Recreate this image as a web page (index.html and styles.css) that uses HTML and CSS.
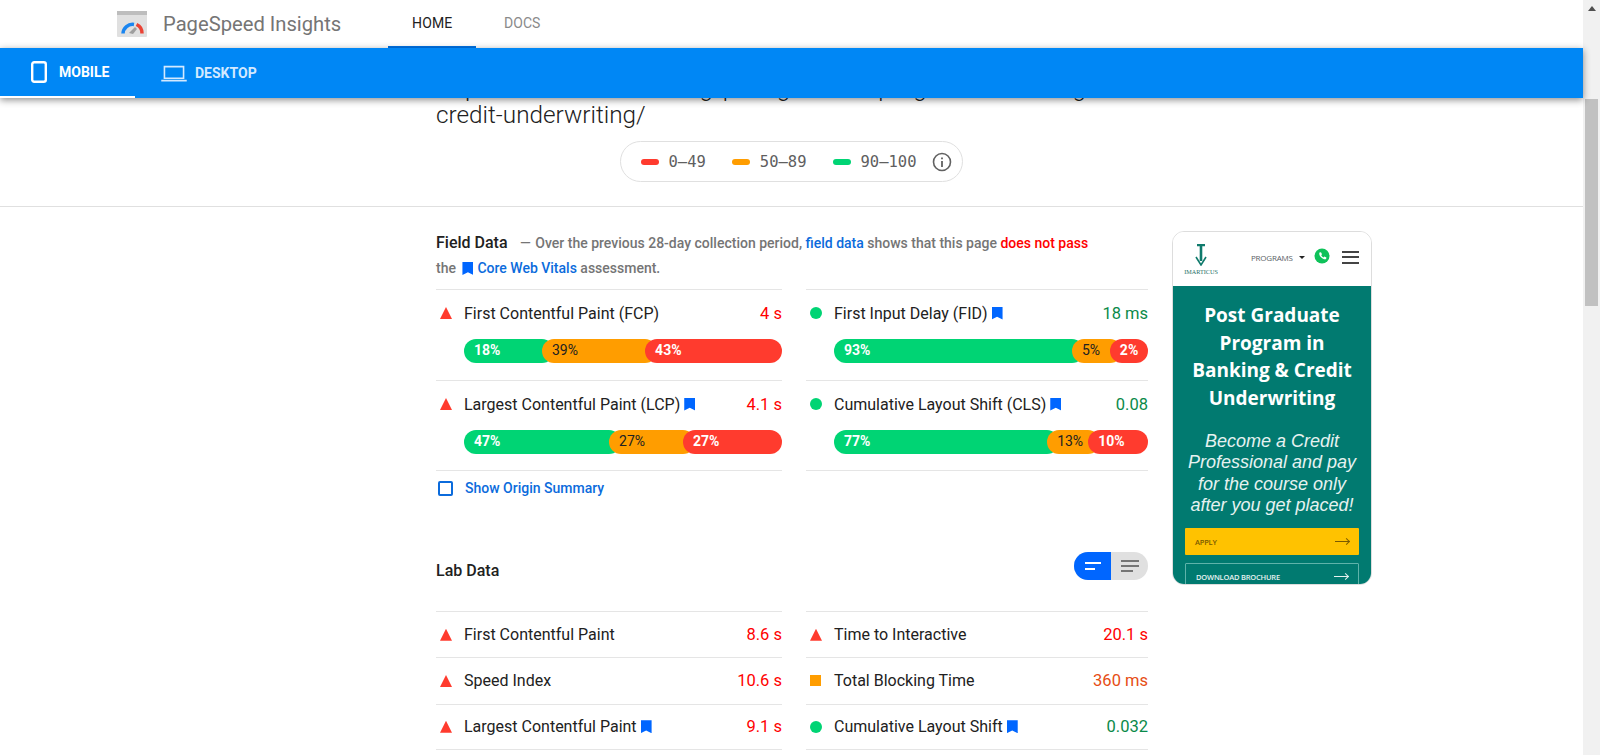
FILE: index.html
```html
<!DOCTYPE html>
<html lang="en">

<head>
   <meta charset="UTF-8">
   <title>PageSpeed Insights</title>
   <link rel="stylesheet" href="styles.css">
</head>

<body>
   <div class="app">
      <div class="main">
         <!-- Top navigation -->
         <header class="topbar">
            <svg class="logo" viewBox="0 0 30 26" width="30" height="26">
               <rect width="30" height="26" rx="1" fill="#e0e0e0" />
               <rect width="30" height="4" fill="#bdbdbd" />
               <path d="M6 22.500a9.500 9.500 0 0 1 11-9" fill="none" stroke="#1a85f0" stroke-width="3.500" />
               <path d="M19.500 13.500a9.500 9.500 0 0 1 5.500 9" fill="none" stroke="#ea4335" stroke-width="3.500" />
               <path d="M12 22l6-6 2 2-4 5z" fill="#9e9e9e" />
            </svg>
            <span class="product">PageSpeed Insights</span>
            <nav class="nav">
               <a class="nav-item nav-active">HOME</a>
               <a class="nav-item">DOCS</a>
            </nav>
         </header>

         <!-- Device tabs -->
         <div class="tabs">
            <a class="tab tab-active">
               <svg viewBox="0 0 16 22" width="16" height="22">
                  <rect x="1.200" y="1.200" width="13.600" height="19.600" rx="2" fill="none" stroke="#fff" stroke-width="2.400" />
               </svg>
               MOBILE
            </a>
            <a class="tab">
               <svg viewBox="0 0 24 16" width="26" height="17">
                  <path d="M3 1.500h18v11H3zM0 14.700h24" fill="none" stroke="#d3e9ff" stroke-width="1.500" />
               </svg>
               DESKTOP
            </a>
         </div>

         <div class="content">
            <div class="summary">
               <div class="url-clip">
                  <h1 class="url">https://www.imarticus.org/post-graduate-program-in-banking-and-<br>credit-underwriting/</h1>
               </div>
               <div class="legend-wrap">
                  <div class="legend">
                     <span class="legend-bar bg-red"></span><span class="legend-text">0–49</span>
                     <span class="legend-bar bg-orange"></span><span class="legend-text">50–89</span>
                     <span class="legend-bar bg-green"></span><span class="legend-text">90–100</span>
                     <svg class="info" viewBox="0 0 20 20" width="20" height="20">
                        <circle cx="10" cy="10" r="8.500" fill="none" stroke="#616161" stroke-width="1.600" />
                        <path d="M10 9v6M10 5.500v1.800" stroke="#616161" stroke-width="1.800" />
                     </svg>
                  </div>
               </div>
            </div>

            <div class="report">
               <div class="report-main">
                  <!-- Field data -->
                  <p class="field-intro">
                     <b class="section-name">Field Data</b>
                     <span class="dash">—</span>
                     Over the previous 28-day collection period, <a class="link">field data</a> shows that this page <span class="fail">does not pass</span>
                     <br>the <i class="bookmark intro-mark"></i><a class="link">Core Web Vitals</a> assessment.
                  </p>

                  <div class="metrics">
                     <div class="metric">
                        <div class="metric-head">
                           <i class="mark triangle"></i>
                           <span class="metric-name">First Contentful Paint (FCP)</span>
                           <span class="value red">4 s</span>
                        </div>
                        <div class="bar">
                           <span class="seg bg-green" style="width:28.3%">18%</span>
                           <span class="seg bg-orange" style="width:36.2%">39%</span>
                           <span class="seg bg-red">43%</span>
                        </div>
                     </div>
                     <div class="metric">
                        <div class="metric-head">
                           <i class="mark circle"></i>
                           <span class="metric-name">First Input Delay (FID)<i class="bookmark"></i></span>
                           <span class="value green">18 ms</span>
                        </div>
                        <div class="bar">
                           <span class="seg bg-green" style="width:79.6%">93%</span>
                           <span class="seg bg-orange" style="width:15.9%">5%</span>
                           <span class="seg bg-red">2%</span>
                        </div>
                     </div>
                     <div class="metric">
                        <div class="metric-head">
                           <i class="mark triangle"></i>
                           <span class="metric-name">Largest Contentful Paint (LCP)<i class="bookmark"></i></span>
                           <span class="value red">4.1 s</span>
                        </div>
                        <div class="bar">
                           <span class="seg bg-green" style="width:49.4%">47%</span>
                           <span class="seg bg-orange" style="width:27%">27%</span>
                           <span class="seg bg-red">27%</span>
                        </div>
                     </div>
                     <div class="metric">
                        <div class="metric-head">
                           <i class="mark circle"></i>
                           <span class="metric-name">Cumulative Layout Shift (CLS)<i class="bookmark"></i></span>
                           <span class="value green">0.08</span>
                        </div>
                        <div class="bar">
                           <span class="seg bg-green" style="width:71.7%">77%</span>
                           <span class="seg bg-orange" style="width:16.9%">13%</span>
                           <span class="seg bg-red">10%</span>
                        </div>
                     </div>
                  </div>

                  <label class="origin">
                     <span class="checkbox"></span>
                     Show Origin Summary
                  </label>

                  <!-- Lab data -->
                  <div class="lab-head">
                     <b class="section-name lab-name">Lab Data</b>
                     <div class="toggle">
                        <span class="toggle-half toggle-on">
                           <svg viewBox="0 0 16 8" width="16" height="8">
                              <path d="M0 1h16M0 7h10" stroke="#fff" stroke-width="2" />
                           </svg>
                        </span>
                        <span class="toggle-half">
                           <svg viewBox="0 0 18 12" width="18" height="12">
                              <path d="M0 1h18M0 6h18M0 11h12" stroke="#757575" stroke-width="2" />
                           </svg>
                        </span>
                     </div>
                  </div>

                  <div class="lab-rows">
                     <div class="lab-row">
                        <i class="mark triangle"></i>
                        <span class="metric-name">First Contentful Paint</span>
                        <span class="value red">8.6 s</span>
                     </div>
                     <div class="lab-row">
                        <i class="mark triangle"></i>
                        <span class="metric-name">Time to Interactive</span>
                        <span class="value red">20.1 s</span>
                     </div>
                     <div class="lab-row">
                        <i class="mark triangle"></i>
                        <span class="metric-name">Speed Index</span>
                        <span class="value red">10.6 s</span>
                     </div>
                     <div class="lab-row">
                        <i class="mark square"></i>
                        <span class="metric-name">Total Blocking Time</span>
                        <span class="value amber">360 ms</span>
                     </div>
                     <div class="lab-row">
                        <i class="mark triangle"></i>
                        <span class="metric-name">Largest Contentful Paint<i class="bookmark"></i></span>
                        <span class="value red">9.1 s</span>
                     </div>
                     <div class="lab-row">
                        <i class="mark circle"></i>
                        <span class="metric-name">Cumulative Layout Shift<i class="bookmark"></i></span>
                        <span class="value green">0.032</span>
                     </div>
                  </div>
               </div>

               <!-- Phone screenshot of the tested page -->
               <aside class="thumb">
                  <div class="thumb-head">
                     <div class="brand">
                        <svg viewBox="0 0 14 22" width="14" height="22">
                           <path d="M3 1h8M7 1v16" fill="none" stroke="#0f7a6c" stroke-width="2.600" />
                           <path d="M2 13l5 8 5-8" fill="none" stroke="#0f7a6c" stroke-width="1.600" />
                        </svg>
                        <span class="brand-name">IMARTICUS</span>
                     </div>
                     <span class="programs">PROGRAMS</span>
                     <span class="caret"></span>
                     <svg class="whatsapp" viewBox="0 0 16 16" width="16" height="16">
                        <circle cx="8" cy="8" r="7.500" fill="#0fc25a" />
                        <path d="M5.500 4.500l1.500-.3 1 2-.8 1c.5 1 1.200 1.700 2.200 2.200l1-.8 2 1-.3 1.500c-3 1.200-8-3.500-6.600-6.600z" fill="#fff" />
                     </svg>
                     <span class="burger"></span>
                  </div>
                  <div class="thumb-body">
                     <h2 class="thumb-title">Post Graduate Program in Banking &amp; Credit Underwriting</h2>
                     <p class="thumb-copy">Become a Credit Professional and pay for the course only after you get placed!</p>
                     <a class="thumb-btn btn-apply">APPLY <span class="arrow"></span></a>
                     <a class="thumb-btn btn-download">DOWNLOAD BROCHURE <span class="arrow"></span></a>
                  </div>
               </aside>
            </div>
         </div>
      </div>

      <!-- Scrollbar -->
      <div class="scrollbar">
         <span class="scroll-up"></span>
         <span class="scroll-thumb"></span>
      </div>
   </div>
</body>

</html>
```

FILE: styles.css
```css
/* General page styling */
* {
   box-sizing: border-box;
}

body {
   margin: 0;
   font-family: Roboto, "Liberation Sans", sans-serif;
   color: #212121;
   background-color: #ffffff;
}

.app {
   display: flex;
   height: 755px;
   overflow: hidden;
}

.main {
   flex: 1;
   min-width: 0;
}

/* Top navigation */
.topbar {
   display: flex;
   align-items: center;
   height: 48px;
   padding-left: 117px;
}

.product {
   margin-left: 16px;
   font-size: 20.200px;
   color: #757575;
}

.nav {
   display: flex;
   align-self: stretch;
   margin-left: 47px;
}

.nav-item {
   display: flex;
   align-items: center;
   justify-content: center;
   width: 92px;
   font-size: 14px;
   font-weight: 400;
   letter-spacing: 0.1px;
   color: #8a8a8a;
   border-bottom: 2px solid transparent;
}

.nav-active {
   width: 88px;
   color: #212121;
   border-bottom-color: #0073e6;
}

/* Device tabs */
.tabs {
   position: relative;
   z-index: 2;
   display: flex;
   height: 50px;
   background-color: #0087f5;
   box-shadow: 0 2px 7px rgba(0, 0, 0, 0.45);
}

.tab {
   display: flex;
   align-items: center;
   gap: 12px;
   padding-left: 31px;
   width: 135px;
   font-size: 14px;
   font-weight: 700;
   color: #d3e9ff;
}

.tab+.tab {
   padding-left: 26px;
   gap: 8px;
   width: 200px;
}

.tab-active {
   color: #ffffff;
   border-bottom: 2px solid #ffffff;
}

/* URL and score legend */
.summary {
   width: 1146px;
   padding-left: 436px;
}

.url-clip {
   display: flex;
   align-items: flex-end;
   height: 30px;
   overflow: hidden;
}

.url {
   margin: 0;
   font-size: 24.300px;
   font-weight: 300;
   line-height: 27px;
   white-space: nowrap;
}

.legend-wrap {
   display: flex;
   justify-content: center;
   padding: 13px 0 24px;
}

.legend {
   display: flex;
   align-items: center;
   width: 343px;
   height: 41px;
   padding-left: 20px;
   border: 1px solid #e0e0e0;
   border-radius: 21px;
}

.legend-bar {
   width: 18px;
   height: 6px;
   border-radius: 3px;
}

.legend-text {
   margin-left: 10px;
   margin-right: 26px;
   font-family: "DejaVu Sans Mono", monospace;
   font-size: 15.500px;
   color: #5f5f5f;
}

.legend-text:nth-of-type(6) {
   margin-right: 15px;
}

.bg-red {
   background-color: #ff3b2e;
}

.bg-orange {
   background-color: #ff9d00;
}

.bg-green {
   background-color: #00d474;
}

/* Report */
.report {
   display: grid;
   grid-template-columns: 712px 200px;
   column-gap: 24px;
   padding: 23px 0 0 436px;
   border-top: 1px solid #e0e0e0;
}

.field-intro {
   margin: 0 0 8px;
   font-size: 14px;
   font-weight: 500;
   line-height: 25px;
   color: #757575;
}

.section-name {
   font-size: 16px;
   font-weight: 500;
   color: #212121;
}

.dash {
   margin: 0 1px 0 9px;
}

.link {
   color: #0b6bdc;
}

.fail {
   color: #ff0000;
}

.metrics {
   display: grid;
   grid-template-columns: 346px 342px;
   column-gap: 24px;
}

.metric {
   padding: 13px 0 17px;
   border-top: 1px solid #e5e5e5;
}

.metric:nth-child(n+3) {
   padding-bottom: 16px;
   border-bottom: 1px solid #e5e5e5;
}

.metric-head {
   display: flex;
   align-items: center;
   height: 20px;
   margin-bottom: 16px;
}

.mark {
   flex: none;
   display: block;
   width: 12px;
   height: 12px;
   margin: 0 12px 0 4px;
}

.triangle {
   background-color: #ff3b2e;
   clip-path: polygon(50% 0, 100% 100%, 0 100%);
}

.circle {
   background-color: #00d474;
   border-radius: 50%;
}

.square {
   width: 11px;
   height: 11px;
   margin-right: 13px;
   background-color: #ff9d00;
}

.metric-name {
   display: flex;
   align-items: center;
   flex: 1;
   font-size: 16px;
   color: #212121;
}

.bookmark {
   flex: none;
   display: inline-block;
   width: 11px;
   height: 13px;
   margin-left: 4px;
   background-color: #0066ff;
   clip-path: polygon(0 0, 100% 0, 100% 100%, 50% 78%, 0 100%);
}

.intro-mark {
   margin: 0 4px 0 3px;
   vertical-align: -2px;
}

.value {
   font-size: 16.500px;
}

.red {
   color: #ff0000;
}

.green {
   color: #0a8a4a;
}

.amber {
   color: #e64d14;
}

/* Distribution bar */
.bar {
   display: flex;
   height: 24px;
   margin-left: 28px;
}

.seg {
   flex: none;
   display: block;
   margin-right: -12px;
   padding-left: 10px;
   font-size: 14px;
   font-weight: 700;
   line-height: 23px;
   color: #ffffff;
   border-radius: 12px;
}

.seg.bg-orange {
   font-weight: 400;
   color: #212121;
}

.seg:last-child {
   flex: 1;
   margin-right: 0;
}

/* Origin checkbox */
.origin {
   display: flex;
   align-items: center;
   gap: 12px;
   height: 20px;
   margin-top: 7px;
   padding-left: 2px;
   font-size: 14px;
   font-weight: 500;
   color: #0b6bdc;
}

.checkbox {
   width: 15px;
   height: 15px;
   border: 2px solid #0b6bdc;
   border-radius: 2px;
}

/* Lab data */
.lab-head {
   display: flex;
   justify-content: space-between;
   height: 28px;
   margin: 54px 0 31px;
   width: 712px;
}

.lab-name {
   padding-top: 9px;
}

.toggle {
   display: flex;
   width: 74px;
   height: 28px;
   overflow: hidden;
   background-color: #e0e0e0;
   border-radius: 14px;
}

.toggle-half {
   display: flex;
   align-items: center;
   justify-content: center;
   width: 37px;
}

.toggle-on {
   background-color: #0066ff;
}

.lab-rows {
   display: grid;
   grid-template-columns: 346px 342px;
   column-gap: 24px;
   grid-auto-rows: 46.330px;
}

.lab-row {
   display: flex;
   align-items: center;
   border-top: 1px solid #e5e5e5;
}

.lab-row:nth-child(n+5) {
   border-bottom: 1px solid #e5e5e5;
}

/* Phone screenshot */
.thumb {
   display: flex;
   flex-direction: column;
   height: 354px;
   margin-top: 1px;
   overflow: hidden;
   border: 1px solid #dddddd;
   border-radius: 12px;
}

.thumb-head {
   display: flex;
   align-items: center;
   flex: none;
   height: 54px;
   padding: 0 0 0 10px;
   background-color: #ffffff;
}

.brand {
   display: flex;
   flex-direction: column;
   align-items: center;
   width: 36px;
}

.brand-name {
   margin-top: 2px;
   font-family: "Liberation Serif", serif;
   font-size: 6.200px;
   color: #1d6f66;
}

.programs {
   margin: -4px 0 0 32px;
   font-family: "Open Sans", sans-serif;
   font-size: 8px;
   color: #5a5f66;
   letter-spacing: -0.2px;
}

.caret {
   margin: -4px 0 0 6px;
   border-top: 3px solid #222222;
   border-left: 3px solid transparent;
   border-right: 3px solid transparent;
}

.whatsapp {
   margin: -7px 0 0 9px;
}

.burger {
   width: 17px;
   height: 13px;
   margin: -4px 0 0 12px;
   border-top: 2px solid #444444;
   border-bottom: 2px solid #444444;
   background: linear-gradient(#444444, #444444) center / 100% 2px no-repeat;
}

.thumb-body {
   flex: 1;
   padding: 16px 12px 0;
   text-align: center;
   color: #ffffff;
   background-color: #017a70;
}

.thumb-title {
   margin: 0 -1px;
   font-family: "Open Sans", sans-serif;
   font-size: 19px;
   font-weight: 700;
   line-height: 27.500px;
}

.thumb-copy {
   margin: 19px -1px 0;
   font-family: "Liberation Sans", sans-serif;
   font-size: 18px;
   font-style: italic;
   line-height: 21.300px;
   color: #e6f2f0;
}

.thumb-btn {
   display: flex;
   align-items: center;
   justify-content: space-between;
   height: 27px;
   padding: 0 10px;
   font-family: "Open Sans", sans-serif;
   font-size: 7.500px;
   font-weight: 600;
   letter-spacing: -0.2px;
   border-radius: 1px;
}

.btn-apply {
   margin-top: 12px;
   color: #7a5a00;
   background-color: #ffc200;
}

.btn-download {
   margin-top: 8px;
   color: #e6f2f0;
   border: 1px solid #5fb3aa;
}

.arrow {
   position: relative;
   width: 14px;
   height: 1px;
   background-color: currentColor;
}

.arrow::after {
   content: "";
   position: absolute;
   right: 0;
   top: -2px;
   width: 4px;
   height: 4px;
   border-top: 1px solid currentColor;
   border-right: 1px solid currentColor;
   transform: rotate(45deg);
}

/* Scrollbar */
.scrollbar {
   flex: none;
   width: 17px;
   padding: 6px 2px 0;
   background-color: #f1f1f1;
}

.scroll-up {
   display: block;
   width: 0;
   margin: 0 auto;
   border-bottom: 5px solid #505050;
   border-left: 4px solid transparent;
   border-right: 4px solid transparent;
}

.scroll-thumb {
   display: block;
   height: 207px;
   margin-top: 88px;
   background-color: #c1c1c1;
}
```
